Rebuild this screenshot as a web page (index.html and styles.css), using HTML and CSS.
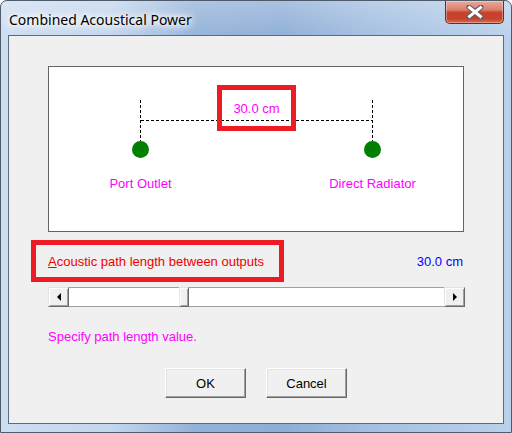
FILE: index.html
```html
<!DOCTYPE html>
<html lang="en">
<head>
    <meta charset="UTF-8">
    <title>Combined Acoustical Power</title>
    <link rel="stylesheet" href="styles.css">
</head>
<body>
    <div class="window">
        <div class="titlebar">
            <span class="title">Combined Acoustical Power</span>
            <button class="close" title="Close">
                <svg width="18" height="14" viewBox="0 0 18 14">
                    <path d="M3 2 L15 12 M15 2 L3 12" stroke="#5b5b5b" stroke-width="5" stroke-linecap="round"/>
                    <path d="M3.5 2.5 L14.5 11.5 M14.5 2.5 L3.5 11.5" stroke="#fff" stroke-width="3" stroke-linecap="square"/>
                </svg>
            </button>
        </div>

        <div class="client">
            <div class="diagram">
                <svg class="diagram-art" width="414" height="164" viewBox="1 1 414 164">
                    <g stroke="#000" stroke-width="1" stroke-dasharray="3 2" fill="none">
                        <line x1="92.5" y1="34" x2="92.5" y2="75"/>
                        <line x1="324.5" y1="34" x2="324.5" y2="75"/>
                        <line x1="93" y1="54.5" x2="325" y2="54.5"/>
                    </g>
                    <circle cx="92.5" cy="83.5" r="8.5" fill="#008000"/>
                    <circle cx="324.5" cy="83.5" r="8.5" fill="#008000"/>
                    <g class="diagram-text" text-anchor="middle">
                        <text x="208.5" y="47">30.0 cm</text>
                        <text x="92.5" y="122">Port Outlet</text>
                        <text x="324.5" y="122">Direct Radiator</text>
                    </g>
                </svg>
                <span class="mark mark-distance"></span>
            </div>

            <div class="field-row">
                <label class="field-label"><u>A</u>coustic path length between outputs</label>
                <span class="field-value">30.0 cm</span>
                <span class="mark mark-label"></span>
            </div>

            <div class="scrollbar">
                <span class="sb-button"><span class="arrow arrow-left"></span></span>
                <span class="sb-track sb-before"></span>
                <span class="sb-thumb"></span>
                <span class="sb-track sb-after"></span>
                <span class="sb-button"><span class="arrow arrow-right"></span></span>
            </div>

            <p class="hint">Specify path length value.</p>

            <div class="buttons">
                <button class="push">OK</button>
                <button class="push">Cancel</button>
            </div>
        </div>
    </div>
</body>
</html>
```

FILE: styles.css
```css
* {
    box-sizing: border-box;
    margin: 0;
    padding: 0;
}

body {
    margin: 0;
    font-family: 'Liberation Sans', Arial, sans-serif;
    font-size: 13px;
    background: #fff;
}

.window {
    width: 512px;
    height: 433px;
    display: flex;
    flex-direction: column;
    padding: 0 7px 8px 7px;
    border: 1px solid #4f5b6b;
    border-radius: 7px 7px 0 0;
    background:
        linear-gradient(to bottom, rgba(255,255,255,0.25), rgba(255,255,255,0) 40px),
        linear-gradient(to right, #cddef1 0%, #c2d6ed 22%, #93b2d9 38%, #8eaed7 55%, #a6c1e2 75%, #bad1eb 100%);
}

.titlebar {
    height: 34px;
    display: flex;
    justify-content: space-between;
    align-items: flex-start;
    flex-shrink: 0;
}

.title {
    margin-top: 9px;
    padding-left: 1px;
    font-family: 'Noto Sans', 'Open Sans', sans-serif;
    font-size: 14px;
    line-height: 19px;
    color: #000;
    text-shadow: 0 0 8px #fff, 0 0 8px #fff, 0 0 12px #fff, 0 0 4px rgba(255,255,255,0.8);
}

.close {
    width: 59px;
    height: 23px;
    border: 1px solid #6e2a22;
    border-top: none;
    border-radius: 0 0 5px 5px;
    background: linear-gradient(to bottom, #e9aa9c 0%, #dc7f6c 40%, #c8412c 52%, #c5432d 80%, #d9694b 100%);
    box-shadow: inset 0 0 0 1px rgba(255,255,255,0.35);
    display: flex;
    align-items: center;
    justify-content: center;
    cursor: pointer;
}

.client {
    flex: 1;
    background: #f0f0f0;
    border: 1px solid #5d6b7c;
    padding: 30px 0 0 39px;
}

.diagram {
    position: relative;
    width: 416px;
    height: 166px;
    background: #fff;
    border: 1px solid #646464;
}

.diagram-art {
    display: block;
}

.diagram-text {
    font-family: 'Liberation Sans', Arial, sans-serif;
    font-size: 13px;
    fill: #ff00ff;
}

.mark {
    position: absolute;
    border: 5px solid #ed1c24;
    pointer-events: none;
}

.mark-distance {
    left: 168px;
    top: 18px;
    width: 79px;
    height: 46px;
}

.field-row {
    position: relative;
    width: 416px;
    margin-top: 22px;
    display: flex;
    justify-content: space-between;
    line-height: 15px;
    padding-right: 1px;
}

.field-label {
    color: #f00000;
}

.field-value {
    color: #0000ff;
}

.mark-label {
    left: -17px;
    top: -14px;
    width: 253px;
    height: 42px;
}

.scrollbar {
    width: 417px;
    height: 20px;
    margin-top: 18px;
    display: flex;
}

.sb-track {
    background: #fff;
    border-top: 1px solid #a0a0a0;
    border-bottom: 1px solid #a0a0a0;
}

.sb-before {
    width: 110px;
}

.sb-after {
    flex: 1;
}

.sb-button,
.sb-thumb {
    background: #f0f0f0;
    border-top: 1px solid #e3e3e3;
    border-left: 1px solid #e3e3e3;
    border-right: 1px solid #696969;
    border-bottom: 1px solid #696969;
    box-shadow: inset 1px 1px 0 #fff, inset -1px -1px 0 #a0a0a0;
}

.sb-button {
    width: 21px;
    display: flex;
    align-items: center;
    justify-content: center;
}

.sb-thumb {
    width: 10px;
}

.arrow {
    width: 0;
    height: 0;
    border-top: 4px solid transparent;
    border-bottom: 4px solid transparent;
}

.arrow-left {
    border-right: 4px solid #000;
}

.arrow-right {
    border-left: 4px solid #000;
}

.hint {
    margin-top: 22px;
    line-height: 15px;
    color: #ff00ff;
}

.buttons {
    margin-top: 24px;
    margin-left: -39px;
    display: flex;
    justify-content: center;
    gap: 20px;
}

.push {
    width: 81px;
    height: 30px;
    font-family: 'Liberation Sans', Arial, sans-serif;
    font-size: 13px;
    line-height: 15px;
    color: #000;
    background: #f0f0f0;
    border-top: 1px solid #fff;
    border-left: 1px solid #fff;
    border-right: 1px solid #696969;
    border-bottom: 1px solid #696969;
    box-shadow: inset -1px -1px 0 #a0a0a0, inset 1px 1px 0 #e3e3e3;
    cursor: pointer;
}
```
